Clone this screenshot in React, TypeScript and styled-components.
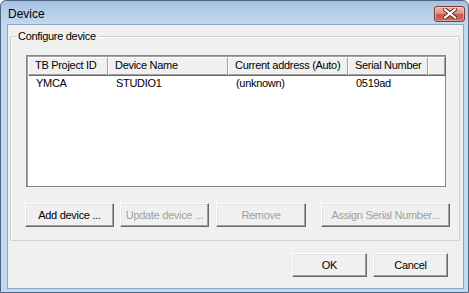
import React from "react";
import styled, { createGlobalStyle } from "styled-components";

const Global = createGlobalStyle`
  html, body { margin: 0; padding: 0; background: #ffffff; }
  body { font-family: "Liberation Sans", Arial, sans-serif; font-size: 11px; letter-spacing: -0.3px; }
  * { box-sizing: border-box; }
`;

const Frame = styled.div`
  width: 469px;
  height: 293px;
  display: flex;
  flex-direction: column;
  border: 1px solid #4f6786;
  border-radius: 6px 6px 0 0;
  background: linear-gradient(180deg, #a6c0df 0px, #b7cfea 12px, #c2d8ef 24px, #c3d9f0 100%);
  padding: 0 4px 3px 6px;
`;

const TitleBar = styled.div`
  height: 23px;
  display: flex;
  align-items: center;
  justify-content: space-between;
  padding-left: 1px;
`;

const TitleText = styled.div`
  font-family: "Liberation Sans", Arial, sans-serif;
  font-size: 12px;
  letter-spacing: 0;
  color: #000;
  margin-top: 3px;
`;

const CloseButton = styled.div`
  width: 31px;
  height: 16px;
  margin-top: 2px;
  margin-right: -1px;
  border: 1px solid #7d3b32;
  border-radius: 3px;
  background: linear-gradient(180deg, #ebb9ae 0%, #dc9283 45%, #c9584a 55%, #cf6a55 100%);
  box-shadow: inset 0 0 0 1px rgba(255, 255, 255, 0.35);
  display: flex;
  align-items: center;
  justify-content: center;
`;

const Client = styled.div`
  flex: 1;
  background: #f0f0f0;
  border: 1px solid #8ea5c2;
  display: flex;
  flex-direction: column;
  padding: 11px 3px 0 2px;
`;

const Group = styled.div`
  position: relative;
  height: 205px;
  border: 1px solid #c9d2d8;
  border-radius: 2px;
  box-shadow: inset 1px 1px 0 #ffffff;
  padding: 18px 0 0 15px;
  display: flex;
  flex-direction: column;
`;

const GroupLabel = styled.span`
  position: absolute;
  top: -8px;
  left: 5px;
  padding: 0 2px;
  background: #f0f0f0;
  font-size: 11px;
  line-height: 14px;
  color: #000;
`;

const ListView = styled.div`
  width: 420px;
  height: 132px;
  background: #ffffff;
  border: 1px solid #828790;
  box-shadow: inset 1px 1px 0 #a0a0a0;
  display: flex;
  flex-direction: column;
  padding: 1px 0 0 1px;
`;

const HeaderRow = styled.div`
  display: flex;
  height: 18px;
`;

const HeaderCell = styled.div<{ $w?: number }>`
  ${(p) => (p.$w ? `width: ${p.$w}px;` : "flex: 1;")}
  height: 18px;
  background: #f0f0f0;
  border-top: 1px solid #ffffff;
  border-left: 1px solid #ffffff;
  border-right: 1px solid #a0a0a0;
  border-bottom: 1px solid #a0a0a0;
  box-shadow: 1px 1px 0 #696969;
  padding-left: 6px;
  line-height: 15px;
  white-space: nowrap;
  overflow: hidden;
  color: #000;
`;

const DataRow = styled.div`
  display: flex;
  height: 17px;
`;

const DataCell = styled.div<{ $w: number }>`
  width: ${(p) => p.$w}px;
  padding-left: 8px;
  line-height: 17px;
  white-space: nowrap;
  color: #000;
`;

const ButtonRow = styled.div`
  display: flex;
  margin-top: 16px;
  margin-left: -1px;
`;

const Button = styled.div<{ $w: number; $gap?: number; $disabled?: boolean }>`
  width: ${(p) => p.$w}px;
  height: 24px;
  margin-left: ${(p) => p.$gap ?? 0}px;
  background: #f0f0f0;
  border-top: 1px solid #ffffff;
  border-left: 1px solid #ffffff;
  border-right: 1px solid #696969;
  border-bottom: 1px solid #696969;
  box-shadow: inset -1px -1px 0 #a0a0a0, inset 1px 1px 0 #e3e3e3;
  display: flex;
  align-items: center;
  justify-content: center;
  color: ${(p) => (p.$disabled ? "#a0a0a0" : "#000000")};
  font-size: 11px;
  white-space: nowrap;
  padding-bottom: 1px;
`;

const Footer = styled.div`
  display: flex;
  justify-content: flex-end;
  margin-top: 12px;
  padding-right: 12px;
`;

const CloseGlyph = () => (
  <svg width="14" height="11" viewBox="0 0 14 11">
    <path d="M2 1.5 L12 9.5 M12 1.5 L2 9.5" stroke="#5a2018" strokeWidth="4" strokeLinecap="square" />
    <path d="M2 1.5 L12 9.5 M12 1.5 L2 9.5" stroke="#ffffff" strokeWidth="2.2" strokeLinecap="square" />
  </svg>
);

const cols = [80, 120, 120, 80];

export default function App() {
  return (
    <>
      <Global />
      <Frame>
        <TitleBar>
          <TitleText>Device</TitleText>
          <CloseButton>
            <CloseGlyph />
          </CloseButton>
        </TitleBar>
        <Client>
          <Group>
            <GroupLabel>Configure device</GroupLabel>
            <ListView>
              <HeaderRow>
                <HeaderCell $w={cols[0]}>TB Project ID</HeaderCell>
                <HeaderCell $w={cols[1]}>Device Name</HeaderCell>
                <HeaderCell $w={cols[2]}>Current address (Auto)</HeaderCell>
                <HeaderCell $w={cols[3]}>Serial Number</HeaderCell>
                <HeaderCell />
              </HeaderRow>
              <DataRow>
                <DataCell $w={cols[0]}>YMCA</DataCell>
                <DataCell $w={cols[1]}>STUDIO1</DataCell>
                <DataCell $w={cols[2]}>(unknown)</DataCell>
                <DataCell $w={cols[3]}>0519ad</DataCell>
              </DataRow>
            </ListView>
            <ButtonRow>
              <Button $w={89}>Add device ...</Button>
              <Button $w={89} $gap={6} $disabled>Update device ...</Button>
              <Button $w={90} $gap={7} $disabled>Remove</Button>
              <Button $w={129} $gap={15} $disabled>Assign Serial Number...</Button>
            </ButtonRow>
          </Group>
          <Footer>
            <Button $w={75}>OK</Button>
            <Button $w={75} $gap={6}>Cancel</Button>
          </Footer>
        </Client>
      </Frame>
    </>
  );
}
